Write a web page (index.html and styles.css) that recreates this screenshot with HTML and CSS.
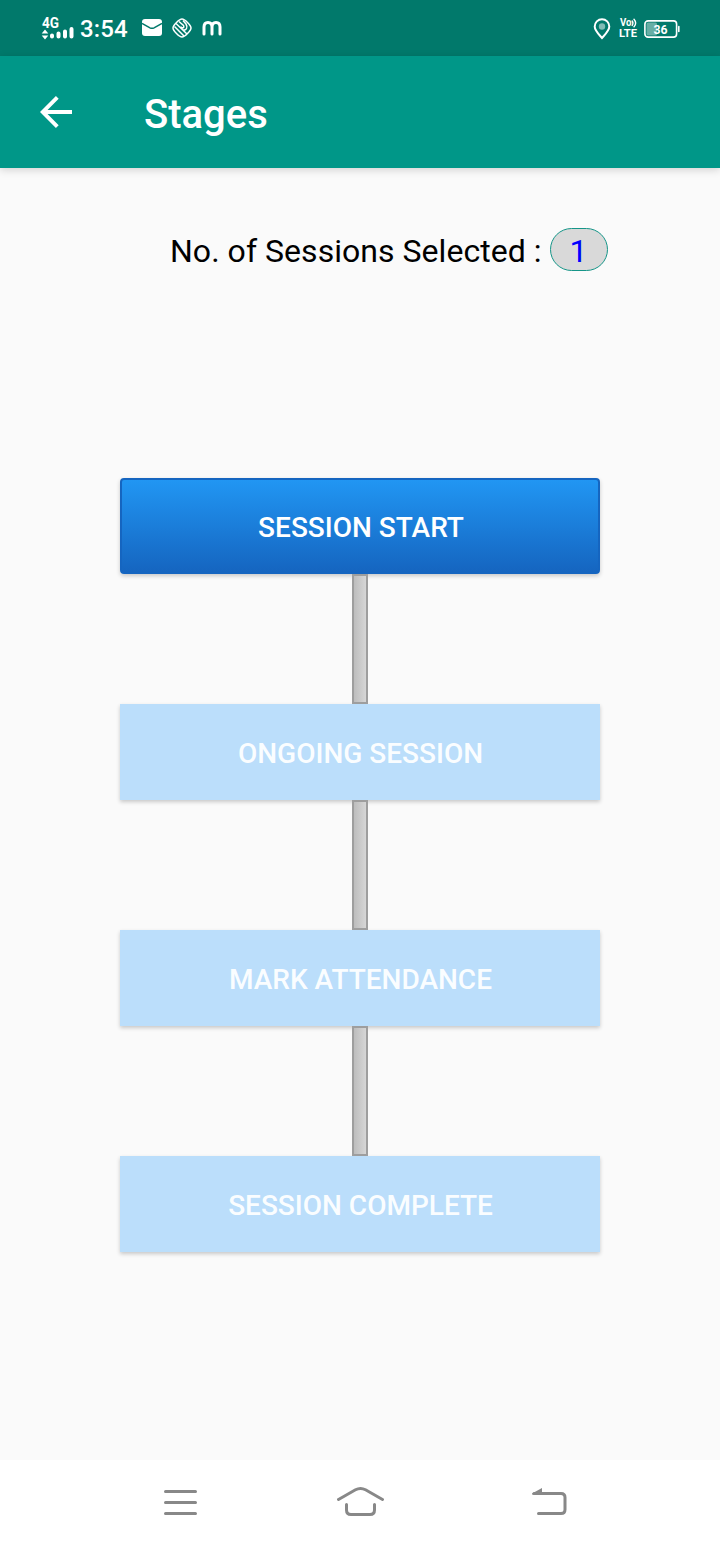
FILE: index.html
```html
<!DOCTYPE html>
<html lang="en">
<head>
<meta charset="utf-8">
<title>Stages</title>
<link rel="stylesheet" href="styles.css">
</head>
<body>
<div class="screen">
  <div class="status">
    <svg class="signal" width="34" height="26" viewBox="0 -2 34 26">
      <text class="net" x="1" y="11" textLength="17" lengthAdjust="spacingAndGlyphs">4G</text>
      <path d="M.7 16.500L4 12.500L7.300 16.500ZM.7 18.500H7.300L4 22.500Z" fill="#fff"/>
      <path d="M11 18.500V19.500M17.500 16.500V19.500M24 14.500V19.500M30.500 12V19.500" stroke="#fff" stroke-width="4" stroke-linecap="round"/>
    </svg>
    <span class="clock">3:54</span>
    <svg class="mail" width="20" height="17" viewBox="0 0 20 17">
      <rect width="20" height="17" rx="3" fill="#fff"/>
      <path d="M0 4.500L8 8.800Q10 9.800 12 8.800L20 4.500" fill="none" stroke="#01796b" stroke-width="1.500"/>
    </svg>
    <svg class="globe" width="20" height="20" viewBox="0 0 20 20" fill="none" stroke="#fff">
      <path d="M10 1Q12 1 15.500 4.500Q19 8 19 10Q19 12 15.500 15.500Q12 19 10 19Q8 19 4.500 15.500Q1 12 1 10Q1 8 4.500 4.500Q8 1 10 1Z" stroke-width="1.500"/>
      <path d="M4 5.500L15 16M2.500 8.500L12 18M7 3.500L11.500 7.500Q12.500 9.500 10.500 10L8.500 9M11 2.500L14 6Q15.500 8.500 14.500 10.500Q13.500 12.500 11.500 11.800" stroke-width="1.500"/>
    </svg>
    <svg class="m-logo" width="20" height="17" viewBox="0 0 20 17">
      <path d="M2 14V7Q2 2.500 6 2.500Q10 2.500 10 7V14M10 7Q10 2.500 14 2.500Q18 2.500 18 7V14" fill="none" stroke="#fff" stroke-width="3" stroke-linecap="round"/>
    </svg>
    <svg class="pin" width="18" height="22" viewBox="0 0 18 22">
      <path d="M9 20C6 16.500 1.700 12.500 1.700 8.500A7.300 7.300 0 0 1 16.300 8.500C16.300 12.500 12 16.500 9 20Z" fill="none" stroke="#fff" stroke-width="2"/>
      <circle cx="9" cy="8.500" r="3.200" fill="#80bcb5"/>
    </svg>
    <svg class="volte" width="20" height="24" viewBox="0 -2 20 24">
      <text class="vo" x="1" y="8.300" textLength="11.500" lengthAdjust="spacingAndGlyphs">Vo</text>
      <text class="lte" x="0" y="19" textLength="18" lengthAdjust="spacingAndGlyphs">LTE</text>
      <path d="M13.200 3Q14.700 5 13.200 7.500M15 1.200Q18.300 5 15 8.700" fill="none" stroke="#fff" stroke-width="1.400" stroke-linecap="round"/>
    </svg>
    <svg class="battery" width="36" height="18" viewBox="0 0 36 18">
      <rect x="2.500" y="2.500" width="10.500" height="13" rx="1.500" fill="#67aea5"/>
      <rect x=".9" y=".9" width="31.700" height="16.200" rx="3.200" fill="none" stroke="#fff" stroke-width="1.600"/>
      <path d="M34.800 6.500V11.500" stroke="#fff" stroke-width="1.600" stroke-linecap="round"/>
      <text class="charge" x="9.500" y="13.700" textLength="14" lengthAdjust="spacingAndGlyphs">36</text>
    </svg>
  </div>
  <header class="appbar">
    <svg width="32" height="32" viewBox="0 0 32 32"><path d="M32 16H3M17.300 1.400L2.700 16L17.300 30.600" fill="none" stroke="#fff" stroke-width="3.900"/></svg>
    <h1 class="title">Stages</h1>
  </header>
  <main class="content">
    <div class="summary"><span class="label">No. of Sessions Selected :</span><span class="count">1</span></div>
    <div class="stages">
      <div class="stage active"><span>SESSION START</span></div>
      <div class="link"></div>
      <div class="stage"><span>ONGOING SESSION</span></div>
      <div class="link"></div>
      <div class="stage"><span>MARK ATTENDANCE</span></div>
      <div class="link"></div>
      <div class="stage"><span>SESSION COMPLETE</span></div>
    </div>
  </main>
  <nav class="navbar">
    <svg class="menu" width="34" height="28" viewBox="0 0 34 28"><path d="M1.500 3.500H31.500M1.500 14.500H31.500M1.500 25.500H31.500"/></svg>
    <svg class="home" width="48" height="32" viewBox="0 0 48 32"><path d="M1.500 14.500L18.500 4.800Q23.500 2 28.500 4.800L45.500 14.500M9.500 19.500V25Q9.500 29.500 14 29.500H33Q37.500 29.500 37.500 25V19.500"/></svg>
    <svg class="back" width="36" height="30" viewBox="0 0 36 30"><path d="M2 8.500H29Q33 8.500 33 12.500V24.500Q33 28.500 29 28.500H6.500"/><path class="tip" d="M0 8.500L10 3V9.500H0Z"/></svg>
  </nav>
</div>
</body>
</html>
```
FILE: styles.css
```css
body { margin: 0; font-family: Roboto, sans-serif; }
.screen { width: 720px; height: 1544px; display: flex; flex-direction: column; background: #fafafa; }
.status { box-sizing: border-box; height: 56px; padding: 0 40px 0 41px; display: flex; align-items: flex-start; background: #01796b; color: #fff; }
.status text { font-family: Roboto, sans-serif; fill: #fff; font-weight: 700; }
.net { font-size: 14px; }
.status .vo { font-size: 10px; }
.status .lte { font-size: 11.5px; }
.charge { font-size: 13px; }
.signal { margin-top: 15px; }
.clock { width: 48px; margin: 14px 0 0 5px; font-size: 24px; line-height: 30px; font-weight: 500; letter-spacing: .1px; white-space: nowrap; }
.mail { margin: 19px 0 0 14px; }
.globe { margin: 18px 0 0 10px; }
.m-logo { margin: 20px 0 0 10px; }
.pin { margin: 18px 0 0 auto; }
.volte { margin: 16px 0 0 8px; }
.battery { margin: 20px 0 0 5px; }
.appbar { position: relative; box-sizing: border-box; height: 112px; padding: 0 40px; display: flex; align-items: center; gap: 72px; background: #009788; box-shadow: 0 2px 8px rgba(0, 0, 0, .16); }
.title { margin: 6px 0 0; color: #fff; font-size: 40px; line-height: 48px; font-weight: 500; }
.content { flex: 1; display: flex; flex-direction: column; }
.summary { height: 43px; padding: 60px 0 0 170px; display: flex; align-items: center; }
.label { width: 380px; margin-top: 2px; font-size: 32px; letter-spacing: .04px; white-space: nowrap; }
.count { box-sizing: border-box; width: 58px; height: 43px; padding-right: 1px; border: 1px solid #159588; border-radius: 22px; background: #d9d9d9; color: #00f; font-size: 32px; line-height: 44px; text-align: center; }
.stages { margin-top: 207px; display: flex; flex-direction: column; align-items: center; }
.stage { box-sizing: border-box; width: 480px; height: 96px; padding: 2px 0 0 1px; display: flex; align-items: center; justify-content: center; background: #bbdefb; box-shadow: 0 2px 4px rgba(0, 0, 0, .2); color: #fafdff; font-size: 28px; font-weight: 500; white-space: nowrap; }
.active { padding: 0; border: 2px solid #1565c0; border-radius: 4px; background: linear-gradient(#2196f3, #1565c0); color: #fff; }
.active span { margin: 2px 0 0 2px; }
.link { box-sizing: border-box; position: relative; width: 16px; height: 130px; border: 2px solid #9e9e9e; background: linear-gradient(90deg, #bdbdbd, #d6d6d6); }
.navbar { height: 84px; display: flex; align-items: flex-start; background: #fff; }
.navbar path { fill: none; stroke: #888; stroke-width: 3; stroke-linecap: round; }
.navbar .tip { fill: #888; stroke: none; }
.menu { margin: 28px 0 0 164px; }
.home { margin: 25px 0 0 139px; }
.back { margin: 25px 0 0 147px; }
```
